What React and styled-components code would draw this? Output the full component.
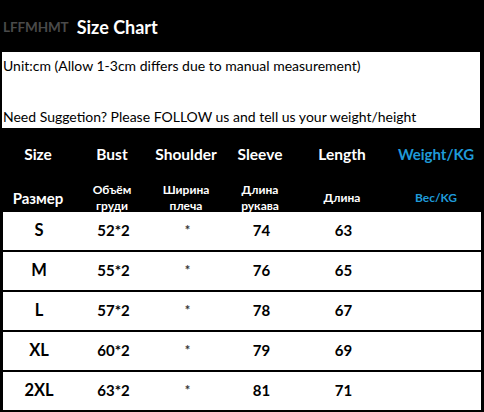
import React from "react";
import styled, { createGlobalStyle } from "styled-components";

const Global = createGlobalStyle`
  html, body { margin: 0; padding: 0; background: #fff; }
  body { font-family: Lato, "Open Sans", sans-serif; }
`;

const COLS = "76px 72px 76px 72px 92px 96px";

const Page = styled.div`
  width: 484px;
  height: 412px;
  overflow: hidden;
  display: flex;
  flex-direction: column;
`;

const TitleBar = styled.div`
  height: 52px;
  background: #000;
  display: flex;
  align-items: center;
  gap: 8px;
  padding: 2px 0 0 3px;
  box-sizing: border-box;
`;

const Brand = styled.span`
  color: #4a4a4a;
  font-weight: 700;
  font-size: 13.5px;
  letter-spacing: -0.1px;
`;

const Title = styled.span`
  color: #fff;
  font-weight: 700;
  font-size: 18px;
`;

const InfoBox = styled.div`
  height: 76px;
  background: #fff;
  border-left: 2px solid #000;
  border-right: 4px solid #000;
  box-sizing: border-box;
  display: flex;
  flex-direction: column;
  justify-content: space-between;
  padding: 5px 0 2px 1px;
  font-size: 14px;
  color: #000;
`;

const InfoLine = styled.div`
  line-height: 18px;
  white-space: nowrap;
`;

const HeadBlock = styled.div`
  height: 84px;
  background: #000;
  display: flex;
  flex-direction: column;
  padding-top: 16px;
  box-sizing: border-box;
`;

const HeadRow = styled.div`
  display: grid;
  grid-template-columns: ${COLS};
  align-items: center;
  height: ${(p) => p.$h}px;
  padding-top: ${(p) => p.$pt || 0}px;
  box-sizing: border-box;
`;

const HeadCell = styled.div`
  text-align: center;
  font-weight: 700;
  font-size: ${(p) => p.$size}px;
  line-height: ${(p) => p.$lh || 16}px;
  color: ${(p) => (p.$blue ? "#1f9ad8" : "#fff")};
  white-space: nowrap;
`;

const Row = styled.div`
  display: grid;
  grid-template-columns: ${COLS};
  align-items: center;
  height: 40px;
  box-sizing: border-box;
  border-left: 3px solid #000;
  border-right: 3px solid #000;
  border-bottom: 2px solid #000;
  background: #fff;
  padding-bottom: 3px;
`;

const Cell = styled.div`
  text-align: center;
  font-weight: 700;
  font-size: ${(p) => p.$size || 15}px;
  color: ${(p) => p.$color || "#000"};
  margin-left: ${(p) => p.$shift || 0}px;
`;

const rows = [
  ["S", "52*2", "*", "74", "63"],
  ["M", "55*2", "*", "76", "65"],
  ["L", "57*2", "*", "78", "67"],
  ["XL", "60*2", "*", "79", "69"],
  ["2XL", "63*2", "*", "81", "71"],
];

export default function App() {
  return (
    <Page>
      <Global />
      <TitleBar>
        <Brand>LFFMHMT</Brand>
        <Title>Size Chart</Title>
      </TitleBar>
      <InfoBox>
        <InfoLine>Unit:cm (Allow 1-3cm differs due to manual measurement)</InfoLine>
        <InfoLine>Need Suggetion? Please FOLLOW us and tell us your weight/height</InfoLine>
      </InfoBox>
      <HeadBlock>
        <HeadRow $h={20}>
          <HeadCell $size={15.5}>Size</HeadCell>
          <HeadCell $size={15.5}>Bust</HeadCell>
          <HeadCell $size={15.5}>Shoulder</HeadCell>
          <HeadCell $size={15.5}>Sleeve</HeadCell>
          <HeadCell $size={15.5}>Length</HeadCell>
          <HeadCell $size={15} $blue>Weight/KG</HeadCell>
        </HeadRow>
        <HeadRow $h={48} $pt={18}>
          <HeadCell $size={15}>Размер</HeadCell>
          <HeadCell $size={12}>Объём<br />груди</HeadCell>
          <HeadCell $size={12}>Ширина<br />плеча</HeadCell>
          <HeadCell $size={12}>Длина<br />рукава</HeadCell>
          <HeadCell $size={12}>Длина</HeadCell>
          <HeadCell $size={12} $blue>Вес/KG</HeadCell>
        </HeadRow>
      </HeadBlock>
      {rows.map((r) => (
        <Row key={r[0]}>
          <Cell $size={16.5} $shift={-4}>{r[0]}</Cell>
          <Cell $size={15} $shift={-3}>{r[1]}</Cell>
          <Cell $size={13} $color="#333" $shift={-3}>{r[2]}</Cell>
          <Cell $size={15} $shift={-3}>{r[3]}</Cell>
          <Cell $size={15} $shift={-3}>{r[4]}</Cell>
          <Cell />
        </Row>
      ))}
    </Page>
  );
}
